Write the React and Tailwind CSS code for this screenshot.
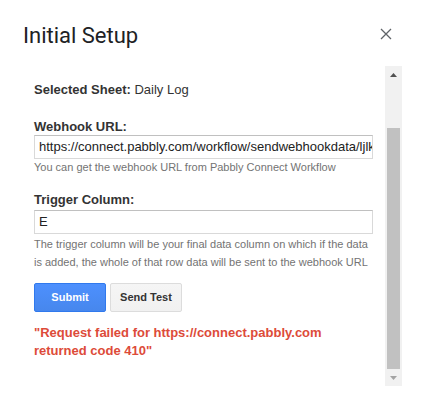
import React from "react";

export default function App() {
  const arial = { fontFamily: '"Liberation Sans", Arial, sans-serif' };
  return (
    <div className="w-[423px] h-[403px] bg-white relative overflow-hidden" style={arial}>
      {/* Header */}
      <div className="flex items-start pt-[22px] pl-[23px] pr-[31px] h-[66px]">
        <div
          className="flex-1 text-[22px] leading-[28px] text-[#202124]"
          style={{ fontFamily: 'Roboto, "Open Sans", sans-serif' }}
        >
          Initial Setup
        </div>
        <button className="mt-[6px] w-[12px] h-[12px] flex items-center justify-center" aria-label="Close">
          <svg width="12" height="12" viewBox="0 0 12 12">
            <path d="M1 1 L11 11 M11 1 L1 11" stroke="#5f6368" strokeWidth="1.3" fill="none" />
          </svg>
        </button>
      </div>

      {/* Body */}
      <div className="flex h-[320px]">
        <div className="ml-[34px] w-[339px] pt-[16px] text-[#333]">
          <div className="text-[13px] leading-[16px]">
            <span className="font-bold">Selected Sheet:</span> Daily Log
          </div>

          <div className="mt-[21px] text-[13px] leading-[16px] font-bold">Webhook URL:</div>
          <div className="h-[24px] border border-[#d9d9d9] border-t-[#c0c0c0] flex items-center pl-[4px] overflow-hidden whitespace-nowrap text-[13px] text-[#222]">
            https://connect.pabbly.com/workflow/sendwebhookdata/ljlkNTY3MDZlMDYzNzA0MzE
          </div>
          <div className="mt-[1px] text-[11px] leading-[14px] text-[#737373]">
            You can get the webhook URL from Pabbly Connect Workflow
          </div>

          <div className="mt-[18px] text-[13px] leading-[16px] font-bold">Trigger Column:</div>
          <div className="mt-[2px] h-[24px] border border-[#d9d9d9] border-t-[#c0c0c0] flex items-center pl-[4px] text-[13px] text-[#222]">
            E
          </div>
          <div className="mt-[1px] text-[11px] leading-[18px] text-[#737373]">
            The trigger column will be your final data column on which if the data
            <br />
            is added, the whole of that row data will be sent to the webhook URL
          </div>

          <div className="mt-[12px] flex gap-[4px]">
            <button className="h-[29px] w-[72px] rounded-[2px] border border-[#3079ed] bg-gradient-to-b from-[#4d90fe] to-[#4787ed] text-white text-[11px] font-bold">
              Submit
            </button>
            <button className="h-[29px] w-[72px] rounded-[2px] border border-[#dcdcdc] bg-gradient-to-b from-[#f5f5f5] to-[#f1f1f1] text-[#333] text-[11px] font-bold">
              Send Test
            </button>
          </div>

          <div className="mt-[12px] text-[13px] leading-[18px] font-bold text-[#dd4b39]">
            "Request failed for https://connect.pabbly.com
            <br />
            returned code 410"
          </div>
        </div>

        {/* Scrollbar */}
        <div className="ml-[12px] w-[17px] h-[320px] bg-[#f1f1f1] flex flex-col items-center">
          <div className="h-[17px] w-full flex items-center justify-center">
            <svg width="7" height="4" viewBox="0 0 7 4">
              <path d="M3.5 0 L7 4 L0 4 Z" fill="#505050" />
            </svg>
          </div>
          <div className="mt-[45px] w-[13px] h-[241px] bg-[#c1c1c1]" />
          <div className="h-[17px] w-full flex items-center justify-center">
            <svg width="7" height="4" viewBox="0 0 7 4">
              <path d="M0 0 L7 0 L3.5 4 Z" fill="#a3a3a3" />
            </svg>
          </div>
        </div>
      </div>
    </div>
  );
}
